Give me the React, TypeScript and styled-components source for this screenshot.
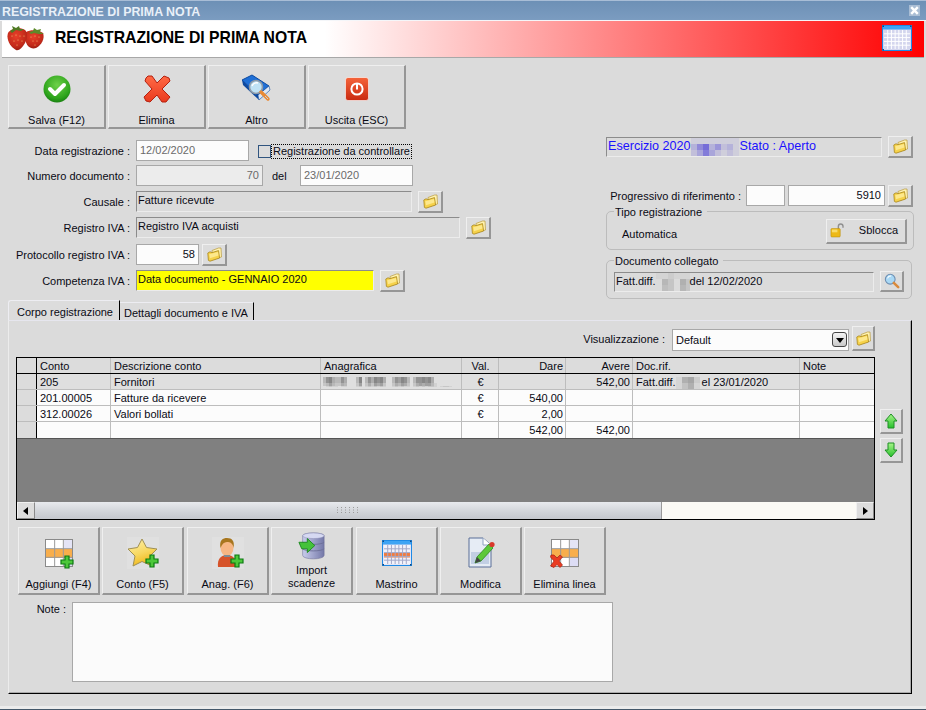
import React from "react";
import styled, { createGlobalStyle } from "styled-components";

const Global = createGlobalStyle`
  html, body { margin: 0; padding: 0; background: #dbdbdb; }
  * { box-sizing: border-box; }
  #root { width: 926px; height: 710px; overflow: hidden; }
`;

const FONT = `"Liberation Sans", Arial, sans-serif`;

const Window = styled.div`
  width: 926px; height: 710px; display: flex; flex-direction: column; overflow: hidden;
  background: #dbdbdb; font: 11px/14px ${FONT}; color: #0a0a14;
  border-bottom: 1px solid #44586a; box-shadow: inset 0 -3px 0 #ececec;
`;
const TitleBar = styled.div`
  height: 21px; flex: none; display: flex; align-items: center; justify-content: space-between;
  padding: 3px 6px 0 2px;
  background: linear-gradient(#6d90b6, #7b9cc0); border-top: 1px solid #a8bdd6;
  color: #e9f0f8; font: 700 12.4px/14px ${FONT};
  border-bottom: 1px solid #f4f6f9;
`;
const CloseBox = styled.div`
  width: 11px; height: 11px; background: #a9bdd4; display: flex; align-items: center; justify-content: center;
  margin-top: -3px;
`;
const Banner = styled.div`
  height: 37px; flex: none; margin: 0 2px; display: flex; align-items: center; justify-content: space-between;
  padding: 0 12px 2px 5px; background: linear-gradient(to right, #fff 35%, #f00 100%);
  border-bottom: 1px solid #a8a8a8;
`;
const BannerTitle = styled.div`
  display: flex; align-items: center; gap: 10px;
  font: 700 15.75px/20px ${FONT}; color: #000;
`;
const Content = styled.div`
  flex: 1; display: flex; flex-direction: column; padding: 7px 0 0 8px;
`;
const Toolbar = styled.div`
  display: flex; gap: 2px; height: 64px; flex: none;
`;
const Bevel = styled.div`
  background: #dcdcdc; border-style: solid; border-width: 1px 2px 2px 1px;
  border-color: #efefef #969696 #969696 #efefef;
  display: flex; align-items: center; justify-content: center;
`;
const BigButton = styled(Bevel)`
  width: 98px; height: 64px; flex-direction: column; justify-content: flex-start;
`;
const BigIcon = styled.div`
  height: 46px; flex: none; display: flex; align-items: center; justify-content: center;
`;
const BigLabel = styled.div`
  line-height: 14px; margin-top: 1px;
`;
const TopForm = styled.div`
  display: flex; height: 171px; flex: none;
`;
const LeftCol = styled.div`
  width: 598px; flex: none; padding-top: 11px; display: flex; flex-direction: column;
`;
const RightCol = styled.div`
  width: 308px; flex: none; padding-top: 7px; display: flex; flex-direction: column;
`;
const FormRow = styled.div<{ $mt?: number }>`
  display: flex; align-items: center; height: 21px; margin-top: ${p => p.$mt ?? 0}px;
`;
const Label = styled.div`
  width: 122px; margin-right: 6px; text-align: right; white-space: nowrap; flex: none;
`;
const TextBox = styled.div<{ $w: number; $right?: boolean; $gray?: boolean; $bg?: string; $ml?: number }>`
  width: ${p => p.$w}px; height: 21px; flex: none; border: 1px solid #a8a8a8; margin-left: ${p => p.$ml ?? 0}px;
  background: ${p => p.$bg ?? "#fcfcfc"}; color: ${p => (p.$gray ? "#6a6a6a" : "#0a0a14")};
  padding: 2px 3px; text-align: ${p => (p.$right ? "right" : "left")}; white-space: nowrap; line-height: 15px;
`;
const ReadField = styled.div<{ $w: number; $bg?: string; $blue?: boolean; $h?: number }>`
  width: ${p => p.$w}px; height: ${p => p.$h ?? 21}px; flex: none;
  border-style: solid; border-width: 1px; border-color: #8c8c8c #ececec #ececec #8c8c8c;
  background: ${p => p.$bg ?? "#dbdbdb"}; color: ${p => (p.$blue ? "#1a10ff" : "#0a0a14")};
  font-size: ${p => (p.$blue ? "12.6px" : "inherit")};
  padding: 0 1px; white-space: nowrap; line-height: 16px; display: flex; align-items: flex-start;
`;
const SmallButton = styled(Bevel)<{ $w?: number; $h?: number; $ml?: number }>`
  width: ${p => p.$w ?? 25}px; height: ${p => p.$h ?? 22}px; flex: none; margin-left: ${p => p.$ml ?? 6}px;
`;
const CheckWrap = styled.div`
  display: flex; align-items: center; margin-left: 9px; height: 21px; padding-top: 2px;
`;
const CheckBox = styled.div`
  width: 13px; height: 13px; border: 1px solid #31557f; background: #dcdcdc; margin-right: 1px;
`;
const FocusLabel = styled.div`
  outline: 1px dotted #000; outline-offset: 0; line-height: 13px; padding: 0 1px; white-space: nowrap;
`;
const Del = styled.div`
  width: 37px; text-align: left; padding-left: 9px; flex: none;
`;
const ProgLabel = styled.div`
  width: 135px; margin-right: 5px; text-align: right; flex: none; white-space: nowrap;
`;
const Group = styled.div<{ $mt: number; $w: number }>`
  position: relative; width: ${p => p.$w}px; height: 39px; margin-top: ${p => p.$mt}px; flex: none;
  border: 1px solid #bcbcbc; border-radius: 5px; display: flex; align-items: center; justify-content: space-between;
`;
const Legend = styled.div`
  position: absolute; top: -6px; left: 7px; background: #dbdbdb; padding: 0 5px 0 1px; line-height: 13px;
`;
const TipoText = styled.div`
  margin: 6px 0 0 15px;
`;
const Sblocca = styled(Bevel)`
  width: 81px; height: 25px; margin: 1px 6px 0 0; justify-content: flex-start; padding: 0 7px 2px 3px; gap: 14px;
`;
const DocRow = styled.div`
  display: flex; align-items: center; padding: 4px 0 0 7px; gap: 6px;
`;
const TabStrip = styled.div`
  display: flex; height: 21px; flex: none; align-items: flex-end;
`;
const ActiveTab = styled.div`
  width: 112px; height: 21px; padding: 4px 0 0 8px; background: #dcdcdc; border-top: 1px solid #ededf2; border-left: 1px solid #ededf2;
  border-right: 1px solid #000; border-radius: 3px 0 0 0; white-space: nowrap;
`;
const OtherTab = styled.div`
  width: 134px; height: 19px; padding: 3px 0 0 4px; border-top: 1px solid #ededf2; border-right: 1px solid #000;
  border-bottom: 1px solid #e6e6ee; white-space: nowrap;
`;
const Panel = styled.div`
  width: 904px; height: 374px; flex: none; border-top: 1px solid #e6e6ee; border-left: 1px solid #ececec;
  border-right: 1px solid #000; border-bottom: 1px solid #000; padding: 5px 0 0 7px; margin-top: -1px;
  display: flex; flex-direction: column; box-shadow: inset -1px -1px 0 #aaa;
`;
const ViewRow = styled.div`
  display: flex; align-items: center; height: 25px; flex: none; justify-content: flex-end; width: 859px;
`;
const ViewLabel = styled.div`
  margin-right: 7px;
`;
const Combo = styled.div`
  width: 177px; height: 22px; background: #fcfcfc; border: 1px solid #a8a8a8; display: flex; align-items: center;
  justify-content: space-between; padding: 0 0 0 3px; margin-top: 2px;
`;
const ComboArrow = styled.div`
  width: 15px; height: 15px; margin-right: 1px; background: linear-gradient(#f4f4f4, #c9c9c9); border: 1px solid #454545; border-radius: 3px;
  display: flex; align-items: center; justify-content: center;
`;
const GridArea = styled.div`
  display: flex; margin-top: 6px; flex: none;
`;
const Grid = styled.div`
  width: 859px; height: 163px; border: 1px solid #000; background: #808080; display: flex; flex-direction: column; flex: none;
`;
const COLS = "20px 74px 210px 141px 37px 67px 67px 167px 74px";
const Row = styled.div<{ $bg: string; $line: string; $h?: number }>`
  display: grid; grid-template-columns: ${COLS}; height: ${p => p.$h ?? 16}px; flex: none;
  background: ${p => p.$bg}; border-bottom: 1px solid ${p => p.$line};
`;
const Cell = styled.div<{ $right?: boolean; $center?: boolean; $dark?: boolean; $hdr?: boolean }>`
  border-right: 1px solid ${p => (p.$dark ? "#000" : "#bdbdbd")};
  background: ${p => (p.$hdr ? "#dcdcdc" : "transparent")};
  padding: 1px 2px 0 3px; line-height: 14px; white-space: nowrap; overflow: hidden;
  text-align: ${p => (p.$right ? "right" : p.$center ? "center" : "left")};
  &:last-child { border-right: 0; }
`;
const GrayFill = styled.div`
  flex: 1;
`;
const ScrollBar = styled.div`
  height: 17px; flex: none; display: flex; background: #fbfaf5; align-items: stretch;
`;
const ScrollBtn = styled.div`
  width: 18px; flex: none; background: #dcdcdc; display: flex; align-items: center; justify-content: center;
  border-right: 1px solid #8a8a8a; border-bottom: 1px solid #8a8a8a; border-top: 1px solid #f0f0f0; border-left: 1px solid #f0f0f0;
`;
const ScrollThumb = styled.div`
  width: 627px; flex: none; background: linear-gradient(#e8eaee, #d2d5da 55%, #c4c7cd); border-right: 1px solid #9a9a9a;
  display: flex; align-items: center; justify-content: center;
`;
const ScrollRest = styled.div`
  flex: 1;
`;
const ArrowCol = styled.div`
  display: flex; flex-direction: column; gap: 4px; padding-top: 52px; margin-left: 5px;
`;
const BottomBar = styled.div`
  display: flex; gap: 2px; margin: 7px 0 0 2px; flex: none;
`;
const ActionButton = styled(Bevel)<{ $mr?: number }>`
  width: 82px; height: 68px; flex-direction: column; justify-content: flex-start;
  margin-right: ${p => p.$mr ?? 0}px;
`;
const ActionIcon = styled.div<{ $h?: number }>`
  height: ${p => p.$h ?? 50}px; flex: none; display: flex; align-items: center; justify-content: center;
`;
const ActionText = styled.div`
  text-align: center; line-height: 13px; white-space: nowrap;
`;
const NoteRow = styled.div`
  display: flex; margin-top: 7px; flex: none;
`;
const NoteLabel = styled.div`
  width: 50px; text-align: right; margin-right: 6px;
`;
const NoteBox = styled.div`
  width: 541px; height: 80px; background: #fbfbfb; border: 1px solid #a8a8a8;
`;
const Blur = styled.svg`
  flex: none; display: block;
`;

/* --- pixelated redactions --- */
const Mosaic = ({ w, h, cell, color, map, style }: { w: number; h: number; cell: number; color: string; map: string[]; style?: React.CSSProperties }) => (
  <Blur width={w} height={h} style={style} shapeRendering="crispEdges">
    {map.map((r, y) => r.split("").map((c, x) => (
      <rect key={`${x}-${y}`} x={x * cell} y={y * cell} width={cell} height={cell} fill={color} opacity={Number(c) / 9} />
    )))}
  </Blur>
);

/* --- icons --- */
const Folder = () => (
  <svg width="15" height="15" viewBox="0 0 15 15">
    <path d="M5 3.5 L11.5 1 L14 1 L14.5 10 L6 12.5Z" fill="#fff2b0" stroke="#b89a3c" strokeWidth=".7" />
    <path d="M.8 6 L3 4.8 L5 5.6 L11.5 3.6 L12.6 11 L3 14.2 L1.4 13.4Z" fill="#f6d24a" stroke="#a8871f" strokeWidth=".8" />
    <path d="M2.2 7.2 L11 4.9 L11.5 8.5 L3 11.2Z" fill="#fde88c" />
  </svg>
);
const FolderBtn = ({ ml, w, h }: { ml?: number; w?: number; h?: number }) => (
  <SmallButton $ml={ml} $w={w} $h={h}><Folder /></SmallButton>
);
const Strawberry = () => (
  <svg width="38" height="25" viewBox="0 0 38 25">
    <defs>
      <radialGradient id="gb1" cx=".45" cy=".35" r=".7"><stop offset="0" stopColor="#e8402a" /><stop offset=".7" stopColor="#c22a1a" /><stop offset="1" stopColor="#8e1a10" /></radialGradient>
    </defs>
    <path d="M19 6 C24 3 33 4 36 7 C38 12 35 19 29 22 C26 23 23 22 21 20 C18 16 17 10 19 6Z" fill="url(#gb1)" />
    <path d="M1 7 C4 2 14 1 18 4 C21 7 20 13 18 17 C15 22 12 25 9 24 C3 21 -1 13 1 7Z" fill="url(#gb1)" />
    <path d="M3 5 L6 3 L5 0 L9 2 L12 0 L13 3 L17 3 L14 5 L9 4 L5 7Z" fill="#4f7a24" />
    <path d="M22 6 L26 5 L27 2 L30 4 L34 3 L33 6 L37 8 L32 8 L27 7 L24 8Z" fill="#5d8a2a" />
    {[[5, 10], [9, 9], [13, 10], [17, 10], [7, 15], [11, 14], [15, 15], [10, 19], [24, 11], [28, 10], [32, 11], [26, 15], [30, 15], [28, 19]].map(([x, y]) => (
      <circle key={`${x}${y}`} cx={x} cy={y} r=".55" fill="#f4c873" />
    ))}
  </svg>
);
const GridLines = ({ x, y, w, h, cols, rows, stroke }: { x: number; y: number; w: number; h: number; cols: number; rows: number; stroke: string }) => (
  <g stroke={stroke} strokeWidth="1">
    {Array.from({ length: cols - 1 }, (_, i) => <line key={`c${i}`} x1={x + ((i + 1) * w) / cols} x2={x + ((i + 1) * w) / cols} y1={y} y2={y + h} />)}
    {Array.from({ length: rows - 1 }, (_, i) => <line key={`r${i}`} y1={y + ((i + 1) * h) / rows} y2={y + ((i + 1) * h) / rows} x1={x} x2={x + w} />)}
  </g>
);
const Calendar = ({ hot }: { hot?: boolean }) => (
  <svg width="30" height="26" viewBox="0 0 30 26">
    <rect x=".5" y=".5" width="29" height="25" fill="#d6d8f0" stroke="#1e8ae6" />
    <rect x="1" y="1" width="28" height="3.5" fill="#3fa4f4" />
    <rect x="1.5" y="5" width="27" height="19.5" fill={hot ? "#f2f2fa" : "#d4d6ee"} />
    {hot && <rect x="2" y="13" width="26" height="4.5" fill="#f47a3a" />}
    <GridLines x={2} y={5} w={26} h={19} cols={7} rows={5} stroke={hot ? "#a4a8c8" : "#fff"} />
    <path d="M.5 .5h1.5v1.5h-1.5z M28 .5h1.5v1.5h-1.5z M.5 24h1.5v1.5h-1.5z M28 24h1.5v1.5h-1.5z" fill="#124a80" />
  </svg>
);
const Check = () => (
  <svg width="28" height="28" viewBox="0 0 28 28">
    <defs><radialGradient id="gchk" cx=".5" cy=".35" r=".7"><stop offset="0" stopColor="#6fd14a" /><stop offset=".7" stopColor="#2ea51c" /><stop offset="1" stopColor="#14760f" /></radialGradient></defs>
    <circle cx="14" cy="14" r="13.5" fill="url(#gchk)" />
    <path d="M7 14 L12 19 L21 10" fill="none" stroke="#fff" strokeWidth="4" strokeLinecap="round" strokeLinejoin="round" />
  </svg>
);
const RedX = () => (
  <svg width="28" height="28" viewBox="0 0 28 28">
    <defs><linearGradient id="gx" x1="0" y1="0" x2="0" y2="1"><stop offset="0" stopColor="#ff6a45" /><stop offset="1" stopColor="#ea3a1e" /></linearGradient></defs>
    <path d="M5 1 L9 1 L14 8 L21 1 L26 3 L27 6 L19 14 L27 22 L23 27 L19 27 L14 20 L7 27 L3 26 L1 22 L9 14 L2 6 L3 3Z" fill="url(#gx)" stroke="#b4200f" strokeWidth="1" strokeLinejoin="round" />
  </svg>
);
const BookLens = () => (
  <svg width="32" height="30" viewBox="0 0 32 30">
    <path d="M1 6 L11 1 L28 12 L17 21 Z" fill="#1f6fd6" stroke="#0e4aa0" />
    <path d="M1 6 L2 11 L18 26 L17 21Z" fill="#0e4aa0" />
    <path d="M17 21 L18 26 L29 16 L28 12Z" fill="#dfe7f2" stroke="#0e4aa0" strokeWidth=".6" />
    <circle cx="15" cy="13" r="6.5" fill="#bfe2f5" stroke="#8d9aa8" strokeWidth="1.6" />
    <path d="M11 12 a5 5 0 0 1 6 -3" stroke="#fff" strokeWidth="1.4" fill="none" />
    <path d="M20 18 L27 25" stroke="#e98a35" strokeWidth="3.4" strokeLinecap="round" />
    <path d="M24 22 L27 25" stroke="#c9d0d8" strokeWidth="1" />
  </svg>
);
const Power = () => (
  <svg width="24" height="24" viewBox="0 0 24 24">
    <defs><linearGradient id="gpw" x1="0" y1="0" x2="0" y2="1"><stop offset="0" stopColor="#f5643a" /><stop offset="1" stopColor="#c92a10" /></linearGradient></defs>
    <rect x=".5" y=".5" width="23" height="23" rx="2.5" fill="url(#gpw)" stroke="#fff" strokeOpacity=".6" />
    <circle cx="12" cy="12" r="5.6" fill="none" stroke="#fff" strokeWidth="2" />
    <path d="M12 7 V12.5" stroke="#fff" strokeWidth="2" />
  </svg>
);
const Lock = () => (
  <svg width="16" height="16" viewBox="0 0 16 16">
    <path d="M9 7 V4 a2.5 2.5 0 0 1 5 0 V5.5" fill="none" stroke="#8f8f8f" strokeWidth="1.5" />
    <rect x="1" y="6.5" width="10" height="9" rx="1" fill="#edb916" stroke="#b98c0c" strokeWidth=".6" />
    <rect x="2" y="7.5" width="6" height="3" fill="#f8dc6a" />
  </svg>
);
const Lens = () => (
  <svg width="16" height="16" viewBox="0 0 18 18">
    <circle cx="7" cy="7" r="5.5" fill="#a9d8f5" stroke="#6d8db0" strokeWidth="1.2" />
    <path d="M4 6 a3.5 3.5 0 0 1 4 -2.5" stroke="#fff" strokeWidth="1.2" fill="none" />
    <path d="M11 11 L16 16" stroke="#d98a3c" strokeWidth="2.8" strokeLinecap="round" />
  </svg>
);
const Arrow = ({ up }: { up?: boolean }) => (
  <svg width="14" height="16" viewBox="0 0 14 16">
    <defs><linearGradient id="garr" x1="0" y1="0" x2="0" y2="1"><stop offset="0" stopColor="#a8f58a" /><stop offset="1" stopColor="#26c02a" /></linearGradient></defs>
    <path d={up ? "M7 1 L13 8 L10 8 L10 15 L4 15 L4 8 L1 8Z" : "M7 15 L13 8 L10 8 L10 1 L4 1 L4 8 L1 8Z"} fill="url(#garr)" stroke="#1d8f24" strokeLinejoin="round" />
  </svg>
);
const Plus = ({ x, y }: { x: number; y: number }) => (
  <path transform={`translate(${x} ${y})`} d="M4 0 H8 V4 H12 V8 H8 V12 H4 V8 H0 V4 H4Z" fill="#4cc83a" stroke="#0c7a12" strokeWidth="1.2" />
);
const Sheet = () => (
  <>
    <rect x="2.5" y="2.5" width="27" height="27" fill="#fff" stroke="#8a8a8a" strokeWidth="1" />
    <rect x="21" y="3" width="8" height="8" fill="#e4e4f6" />
    <rect x="21" y="21" width="8" height="8" fill="#dcdcf4" />
    <rect x="3" y="12" width="26" height="9" fill="#f8ae4c" />
    <GridLines x={3} y={3} w={26} h={26} cols={3} rows={3} stroke="#9a9a9a" />
  </>
);
const TableAdd = () => (
  <svg width="32" height="32" viewBox="0 0 32 32"><Sheet /><Plus x={18} y={19} /></svg>
);
const TableDel = () => (
  <svg width="32" height="32" viewBox="0 0 32 32"><Sheet />
    <path d="M2 18 L5 18 L8 21 L11 18 L13.5 20 L10 24 L13.5 28 L11 30.5 L8 27.5 L5 30.5 L1.5 29 L5 24 L1.5 20Z" fill="#ea3c22" stroke="#a8200e" strokeWidth=".7" />
  </svg>
);
const StarAdd = () => (
  <svg width="32" height="32" viewBox="0 0 32 32">
    <rect width="32" height="32" fill="#e0e0e0" />
    <defs><linearGradient id="gstar" x1="0" y1="0" x2=".4" y2="1"><stop offset="0" stopColor="#fff2b0" /><stop offset=".6" stopColor="#f8d860" /><stop offset="1" stopColor="#f0b81c" /></linearGradient></defs>
    <path d="M15 2 L19.5 10.5 L30 12 L23 19 L25 29 L15 24.5 L6 29 L8 19 L1 12 L10.5 10.5Z" fill="url(#gstar)" stroke="#a09054" strokeLinejoin="round" />
    <Plus x={19} y={18} />
  </svg>
);
const UserAdd = () => (
  <svg width="32" height="32" viewBox="0 0 32 32">
    <rect width="32" height="32" fill="#e0e0e0" />
    <path d="M6 30 C5 22 9 18 15 18 C21 18 25 22 24 30Z" fill="#d6532a" />
    <ellipse cx="15" cy="11" rx="6.5" ry="8" fill="#f6b684" />
    <path d="M8.5 11 C7 3 11 1 15 1 C20 1 23 4 21.5 11 C21 6 18 5 15 5 C12 5 10 7 8.5 11Z" fill="#a8761e" />
    <rect x="12" y="18" width="6" height="2" fill="#7e8a94" />
    <Plus x={19} y={18} />
  </svg>
);
const DbImport = () => (
  <svg width="28" height="28" viewBox="0 0 30 30">
    <defs><linearGradient id="gdb" x1="0" y1="0" x2="1" y2="0"><stop offset="0" stopColor="#c9cdec" /><stop offset="1" stopColor="#7478a8" /></linearGradient></defs>
    <path d="M5 4 C5 0 28 0 28 4 V25 C28 30 5 30 5 25Z" fill="url(#gdb)" stroke="#6d7098" strokeWidth=".6" />
    <ellipse cx="16.5" cy="4" rx="11.5" ry="3" fill="#d6d9f2" stroke="#8a8db4" strokeWidth=".5" />
    <path d="M5 11 C8 14 25 14 28 11 M5 18 C8 21 25 21 28 18" fill="none" stroke="#6d7098" />
    <path d="M1 11 L10 11 L10 7 L18 14.5 L10 22 L10 18 L4 18Z" fill="#44c23a" stroke="#1c8a20" strokeLinejoin="round" />
  </svg>
);
const DocPen = () => (
  <svg width="30" height="32" viewBox="0 0 30 32">
    <path d="M3 1 H17 L25 8 V30 H3Z" fill="#e6ecf5" stroke="#5a6f98" />
    <rect x="5" y="15" width="18" height="12" fill="#c2cfe4" />
    <path d="M17 1 V8 H25" fill="#fff" stroke="#8ea2c2" />
    <path d="M9 26 L11 20 L23 7 L27 11 L15 24Z" fill="#5cc83a" stroke="#2a8a1a" strokeWidth=".8" />
    <circle cx="26" cy="7.5" r="2.6" fill="#d8382a" />
    <path d="M9 26 L11 20 L15 24Z" fill="#444" />
  </svg>
);
const Tri = ({ dir }: { dir: "l" | "r" | "d" }) => (
  <svg width="8" height="8" viewBox="0 0 8 8">
    <path d={dir === "l" ? "M6 0 V8 L1 4Z" : dir === "r" ? "M2 0 V8 L7 4Z" : "M0 2 H8 L4 7Z"} fill="#000" />
  </svg>
);
const Grip = () => (
  <svg width="22" height="7" viewBox="0 0 22 7">
    {[0, 1, 2].map(r => [0, 1, 2, 3, 4, 5].map(c => <rect key={`${r}${c}`} x={c * 4} y={r * 2.5} width="1" height="1" fill="#9a9a9a" />))}
  </svg>
);

const rows = [
  { c: "205", d: "Fornitori", blur: true, v: "€", da: "", av: "542,00", sel: true },
  { c: "201.00005", d: "Fatture da ricevere", v: "€", da: "540,00", av: "" },
  { c: "312.00026", d: "Valori bollati", v: "€", da: "2,00", av: "" },
  { c: "", d: "", v: "", da: "542,00", av: "542,00" },
];

export default function App() {
  return (
    <Window>
      <Global />
      <TitleBar>
        <span>REGISTRAZIONE DI PRIMA NOTA</span>
        <CloseBox>
          <svg width="9" height="9" viewBox="0 0 9 9"><path d="M1.2 1.2 L7.8 7.8 M7.8 1.2 L1.2 7.8" stroke="#fff" strokeWidth="2.4" /></svg>
        </CloseBox>
      </TitleBar>
      <Banner>
        <BannerTitle><Strawberry />REGISTRAZIONE DI PRIMA NOTA</BannerTitle>
        <Calendar />
      </Banner>
      <Content>
        <Toolbar>
          <BigButton><BigIcon><Check /></BigIcon><BigLabel>Salva (F12)</BigLabel></BigButton>
          <BigButton><BigIcon><RedX /></BigIcon><BigLabel>Elimina</BigLabel></BigButton>
          <BigButton><BigIcon><BookLens /></BigIcon><BigLabel>Altro</BigLabel></BigButton>
          <BigButton><BigIcon><Power /></BigIcon><BigLabel>Uscita (ESC)</BigLabel></BigButton>
        </Toolbar>
        <TopForm>
          <LeftCol>
            <FormRow>
              <Label>Data registrazione :</Label>
              <TextBox $w={113} $gray>12/02/2020</TextBox>
              <CheckWrap><CheckBox /><FocusLabel>Registrazione da controllare</FocusLabel></CheckWrap>
            </FormRow>
            <FormRow $mt={4}>
              <Label>Numero documento :</Label>
              <TextBox $w={127} $right $gray $bg="#ececec">70</TextBox>
              <Del>del</Del>
              <TextBox $w={113} $gray>23/01/2020</TextBox>
            </FormRow>
            <FormRow $mt={5}>
              <Label>Causale :</Label>
              <ReadField $w={276}>Fatture ricevute</ReadField>
              <FolderBtn />
            </FormRow>
            <FormRow $mt={5}>
              <Label>Registro IVA :</Label>
              <ReadField $w={324}>Registro IVA acquisti</ReadField>
              <FolderBtn />
            </FormRow>
            <FormRow $mt={6}>
              <Label>Protocollo registro IVA :</Label>
              <TextBox $w={63} $right>58</TextBox>
              <FolderBtn ml={3} />
            </FormRow>
            <FormRow $mt={5}>
              <Label>Competenza IVA :</Label>
              <ReadField $w={238} $bg="#ffff00">Data documento - GENNAIO 2020</ReadField>
              <FolderBtn />
            </FormRow>
          </LeftCol>
          <RightCol>
            <FormRow>
              <ReadField $w={276} $blue $h={20}>
                Esercizio 2020
                <Mosaic w={49} h={18} cell={6} color="#6a60d8" map={["11111111", "36835231", "24742121"]} />
                Stato : Aperto
              </ReadField>
              <FolderBtn />
            </FormRow>
            <FormRow $mt={28}>
              <ProgLabel>Progressivo di riferimento :</ProgLabel>
              <TextBox $w={39}></TextBox>
              <TextBox $w={97} $right $ml={3}>5910</TextBox>
              <FolderBtn ml={3} />
            </FormRow>
            <Group $mt={5} $w={308}>
              <Legend>Tipo registrazione</Legend>
              <TipoText>Automatica</TipoText>
              <Sblocca><Lock />Sblocca</Sblocca>
            </Group>
            <Group $mt={10} $w={306}>
              <Legend>Documento collegato</Legend>
              <DocRow>
                <ReadField $w={260} $h={20}>
                  Fatt.diff.
                  <Mosaic w={34} h={18} cell={6} color="#9a9a9a" map={["112111", "053063", "043053"]} />
                  del 12/02/2020
                </ReadField>
                <SmallButton $ml={0} $w={24} $h={21}><Lens /></SmallButton>
              </DocRow>
            </Group>
          </RightCol>
        </TopForm>
        <TabStrip>
          <ActiveTab>Corpo registrazione</ActiveTab>
          <OtherTab>Dettagli documento e IVA</OtherTab>
        </TabStrip>
        <Panel>
          <ViewRow>
            <ViewLabel>Visualizzazione :</ViewLabel>
            <Combo>Default<ComboArrow><Tri dir="d" /></ComboArrow></Combo>
            <SmallButton $ml={3} $w={23} $h={25}><Folder /></SmallButton>
          </ViewRow>
          <GridArea>
            <Grid>
              <Row $bg="#dcdcdc" $line="#000">
                <Cell $dark />
                <Cell>Conto</Cell>
                <Cell>Descrizione conto</Cell>
                <Cell>Anagrafica</Cell>
                <Cell $center>Val.</Cell>
                <Cell $right>Dare</Cell>
                <Cell $right>Avere</Cell>
                <Cell>Doc.rif.</Cell>
                <Cell>Note</Cell>
              </Row>
              {rows.map((r, i) => (
                <Row key={i} $bg={r.sel ? "#dfdfdf" : "#fcfcfc"} $line={i === 3 ? "#555" : "#bdbdbd"} $h={i === 3 ? 17 : 16}>
                  <Cell $dark $hdr />
                  <Cell>{r.c}</Cell>
                  <Cell>{r.d}</Cell>
                  <Cell>
                    {r.blur && <Mosaic w={135} h={10} cell={3} color="#6e6e6e" map={[
                      "36743364000370364767400365763036676740000000000",
                      "36743364000370364767400365763036676740000000000",
                      "23532243000250242545200243542024545531000000000",
                      "01211011000120121212100121211012121221012210000"]} style={{ marginTop: 2, marginLeft: -1 }} />}
                  </Cell>
                  <Cell $center>{r.v}</Cell>
                  <Cell $right>{r.da}</Cell>
                  <Cell $right>{r.av}</Cell>
                  <Cell>
                    {r.sel && (
                      <span>Fatt.diff.<Mosaic w={26} h={12} cell={6} color="#8a8a8a" style={{ display: "inline-block", verticalAlign: -3 }} map={["1562", "1351"]} />el 23/01/2020</span>
                    )}
                  </Cell>
                  <Cell />
                </Row>
              ))}
              <GrayFill />
              <ScrollBar>
                <ScrollBtn><Tri dir="l" /></ScrollBtn>
                <ScrollThumb><Grip /></ScrollThumb>
                <ScrollRest />
                <ScrollBtn><Tri dir="r" /></ScrollBtn>
              </ScrollBar>
            </Grid>
            <ArrowCol>
              <SmallButton $ml={0} $w={23} $h={25}><Arrow up /></SmallButton>
              <SmallButton $ml={0} $w={23} $h={25}><Arrow /></SmallButton>
            </ArrowCol>
          </GridArea>
          <BottomBar>
            <ActionButton><ActionIcon><TableAdd /></ActionIcon><ActionText>Aggiungi (F4)</ActionText></ActionButton>
            <ActionButton $mr={1}><ActionIcon><StarAdd /></ActionIcon><ActionText>Conto (F5)</ActionText></ActionButton>
            <ActionButton><ActionIcon><UserAdd /></ActionIcon><ActionText>Anag. (F6)</ActionText></ActionButton>
            <ActionButton $mr={1}><ActionIcon $h={36}><DbImport /></ActionIcon><ActionText>Import<br />scadenze</ActionText></ActionButton>
            <ActionButton><ActionIcon><Calendar hot /></ActionIcon><ActionText>Mastrino</ActionText></ActionButton>
            <ActionButton><ActionIcon><DocPen /></ActionIcon><ActionText>Modifica</ActionText></ActionButton>
            <ActionButton><ActionIcon><TableDel /></ActionIcon><ActionText>Elimina linea</ActionText></ActionButton>
          </BottomBar>
          <NoteRow>
            <NoteLabel>Note :</NoteLabel>
            <NoteBox />
          </NoteRow>
        </Panel>
      </Content>
    </Window>
  );
}
